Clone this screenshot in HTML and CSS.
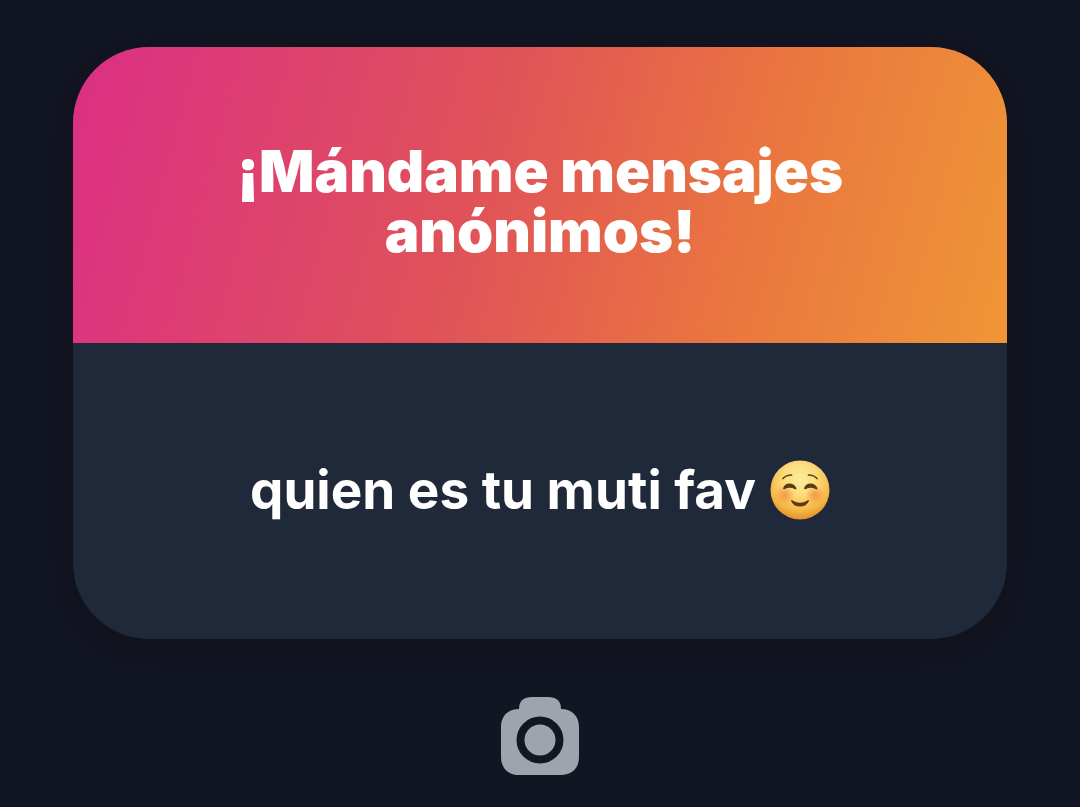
FILE: index.html
```html
<!DOCTYPE html>
<html lang="es">

<head>
    <meta charset="UTF-8">
    <meta name="viewport" content="width=device-width, initial-scale=1.0">
    <title>Mensajes anónimos</title>
    <link rel="stylesheet" href="styles.css">
</head>

<body>
    <main>
        <article class="card">
            <header class="card-head">
                <h1>¡Mándame mensajes anónimos!</h1>
            </header>
            <div class="card-body">
                <p>quien es tu muti fav</p>
                <svg class="emoji" viewBox="0 0 60 60" role="img" aria-label="☺️">
                    <defs>
                        <radialGradient id="face" cx="50%" cy="32%" r="70%">
                            <stop offset="0" stop-color="#fdeb9c" />
                            <stop offset="0.4" stop-color="#fbdc7a" />
                            <stop offset="0.75" stop-color="#f7b848" />
                            <stop offset="1" stop-color="#e1892b" />
                        </radialGradient>
                        <radialGradient id="blush">
                            <stop offset="0" stop-color="#ee7a38" stop-opacity="0.65" />
                            <stop offset="1" stop-color="#ee7a38" stop-opacity="0" />
                        </radialGradient>
                    </defs>
                    <circle cx="30" cy="30" r="29.5" fill="url(#face)" />
                    <circle cx="15" cy="35" r="10" fill="url(#blush)" />
                    <circle cx="45" cy="35" r="10" fill="url(#blush)" />
                    <g fill="none" stroke="#69400f" stroke-linecap="round">
                        <path d="M13 18.5Q16 15 21.5 15M38.5 15Q44 15 47 18.5" stroke-width="1.7" />
                    </g>
                    <g fill="#5c3a12">
                        <path d="M13 28.5Q14.5 23.5 19.5 23.5Q24.5 23.5 26.5 28.5Q26 30 24.5 29Q19.5 26.5 15 29Q13.5 29.5 13 28.5Z" />
                        <path d="M34 28.5Q35.5 23.5 40.5 23.5Q45.5 23.5 47.5 28.5Q47 30 45.5 29Q40.5 26.5 36 29Q34.5 29.5 34 28.5Z" />
                        <path d="M21 41Q21 39.5 22.5 40.5Q30 45 37.5 40.5Q39 39.5 39 41Q36.5 46.5 30 46.5Q23.5 46.5 21 41Z" />
                    </g>
                </svg>
            </div>
        </article>
        <button class="camera" type="button" aria-label="Cámara">
            <svg viewBox="0 0 78 78" aria-hidden="true">
                <path fill="#9da4ac" fill-rule="evenodd" d="M18 12Q18 0 31 0H47Q60 0 60 12C71 12 78 19 78 30V60C78 71 71 78 60 78H18C7 78 0 71 0 60V30C0 19 7 12 18 12ZM39 19.5a23.5 23.5 0 1 0 0 47a23.5 23.5 0 1 0 0-47Z" />
                <circle cx="39" cy="43" r="15.5" fill="#9da4ac" />
            </svg>
        </button>
    </main>
</body>

</html>
```
FILE: styles.css
```css
* {
    margin: 0;
    padding: 0;
    box-sizing: border-box;
}

body {
    background-color: #121522;
    font-family: Inter, "Liberation Sans", sans-serif;
    color: white;
}

main {
    min-height: 100vh;
    padding: 47px 73px 32px;
    display: flex;
    flex-direction: column;
    align-items: center;
    gap: 58px;
}

.card {
    width: 100%;
    border-radius: 76px;
    overflow: hidden;
    background-color: #202939;
    box-shadow: 0 8px 24px rgba(16, 18, 26, 0.9);
}

.card-head,
.card-body {
    min-height: 296px;
    padding: 32px 120px;
    display: flex;
    justify-content: center;
    align-items: center;
}

.card-head {
    padding-top: 44px;
    background: linear-gradient(105deg, #db2f85 0%, #e05259 43%, #e97440 70%, #f09636 100%);
}

h1 {
    font-size: 58px;
    font-weight: 900;
    line-height: 60px;
    text-align: center;
}

.card-body {
    gap: 14px;
    padding-bottom: 34px;
}

p {
    font-size: 53px;
    font-weight: 700;
    line-height: 60px;
}

.emoji {
    width: 60px;
    height: 60px;
    flex-shrink: 0;
}

.camera {
    width: 78px;
    height: 78px;
    border: none;
    background: none;
    cursor: pointer;
}

.camera svg {
    display: block;
}
```
